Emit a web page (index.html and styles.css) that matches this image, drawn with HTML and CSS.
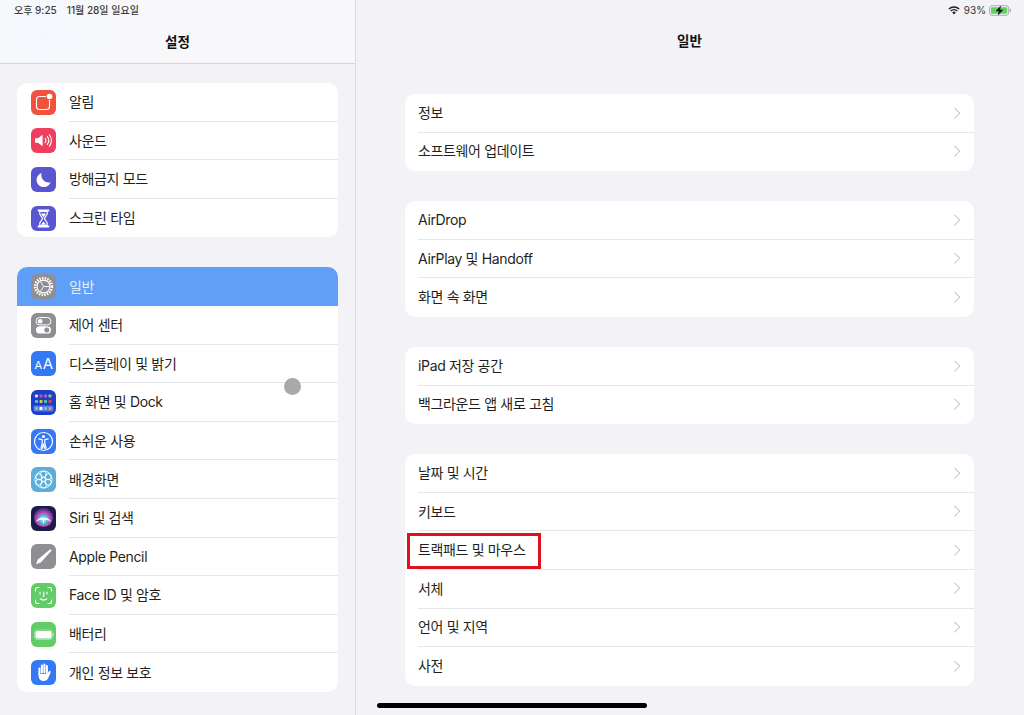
FILE: index.html
```html
<!DOCTYPE html>
<html lang="ko">
<head>
<meta charset="utf-8">
<title>설정 - 일반</title>
<link rel="stylesheet" href="styles.css">
</head>
<body>
<div class="screen">
  <aside class="sidebar">
    <header class="side-head">
      <div class="status-left"><span>오후 9:25</span><span>11월 28일 일요일</span></div>
      <h1 class="title">설정</h1>
    </header>
    <section class="card side-first">
      <div class="row"><span class="icon red"><svg viewBox="0 0 25 25"><rect x="5.5" y="6.5" width="13" height="13" rx="3" fill="none" stroke="#fff" stroke-width="1.1"/><circle cx="18.5" cy="6.5" r="3.6" fill="#f0533c"/><circle cx="18.5" cy="6.5" r="2.8" fill="#fff"/></svg></span><span class="label">알림</span></div>
      <div class="row"><span class="icon pink"><svg viewBox="0 0 25 25"><path d="M4 10.3h3l4.6-3.6v11.6L7 14.7H4z" fill="#fff"/><path d="M14 10.3a3 3 0 0 1 0 4.4M16.2 8.6a6 6 0 0 1 0 7.8M18.4 6.8a9 9 0 0 1 0 11.4" fill="none" stroke="#fff" stroke-width="1.1" stroke-linecap="round"/></svg></span><span class="label">사운드</span></div>
      <div class="row"><span class="icon indigo"><svg viewBox="0 0 25 25"><path d="M10.6 6a7.2 7.2 0 1 0 9 9.2 7.4 7.4 0 0 1-9-9.2z" fill="#fff"/></svg></span><span class="label">방해금지 모드</span></div>
      <div class="row"><span class="icon indigo"><svg viewBox="0 0 25 25"><path d="M7.5 4.5h10M7.5 20.5h10" stroke="#fff" stroke-width="1.8" stroke-linecap="round"/><path d="M8.8 5.5h7.4v2.6l-2.8 4.4 2.8 4.4v2.6H8.8v-2.6l2.8-4.4-2.8-4.4z" fill="none" stroke="#fff" stroke-width="1.2"/><path d="M9.8 18.8l2.7-3.4 2.7 3.4zM10 7.4h5l-2.5 4z" fill="#fff"/></svg></span><span class="label">스크린 타임</span></div>
    </section>
    <section class="card">
      <div class="row selected"><span class="icon gray"><svg viewBox="0 0 25 25"><circle cx="12.5" cy="12.5" r="8.4" fill="none" stroke="#fff" stroke-width="2.6" stroke-dasharray="1.5 1.2"/><circle cx="12.5" cy="12.5" r="6.4" fill="none" stroke="#fff" stroke-width="1.1"/><path d="M12.5 12.5H18.5M12.5 12.5L9.5 7.3M12.5 12.5L9.5 17.7" stroke="#fff" stroke-width=".9"/></svg></span><span class="label">일반</span></div>
      <div class="row"><span class="icon gray"><svg viewBox="0 0 25 25"><rect x="5" y="4.5" width="15" height="7.4" rx="3.7" fill="none" stroke="#fff" stroke-width="1"/><circle cx="9.2" cy="8.2" r="2.3" fill="#fff"/><rect x="5" y="13.2" width="15" height="7.4" rx="3.7" fill="#fff"/><circle cx="15.8" cy="16.9" r="2.5" fill="#8e8e93"/></svg></span><span class="label">제어 센터</span></div>
      <div class="row"><span class="icon blue"><span class="aa"><small>A</small>A</span></span><span class="label">디스플레이 및 밝기</span></div>
      <div class="row"><span class="icon navy"><svg viewBox="0 0 25 25"><g><rect x="4" y="4.5" width="3" height="3" rx=".7" fill="#d8d8e8"/><rect x="8.5" y="4.5" width="3" height="3" rx=".7" fill="#e0526a"/><rect x="13" y="4.5" width="3" height="3" rx=".7" fill="#a860d8"/><rect x="17.5" y="4.5" width="3" height="3" rx=".7" fill="#8fc860"/><rect x="4" y="10" width="3" height="3" rx=".7" fill="#60b8e8"/><rect x="8.5" y="10" width="3" height="3" rx=".7" fill="#f0c040"/><rect x="13" y="10" width="3" height="3" rx=".7" fill="#48c8a0"/><rect x="17.5" y="10" width="3" height="3" rx=".7" fill="#e04848"/></g><rect x="2.5" y="15.5" width="20" height="6" rx="1.6" fill="#5a78e0"/><rect x="4" y="17" width="3" height="3" rx=".7" fill="#70d088"/><rect x="8.5" y="17" width="3" height="3" rx=".7" fill="#fff"/><rect x="13" y="17" width="3" height="3" rx=".7" fill="#70c0f0"/><rect x="17.5" y="17" width="3" height="3" rx=".7" fill="#e89060"/></svg></span><span class="label">홈 화면 및 Dock</span></div>
      <div class="row"><span class="icon blue"><svg viewBox="0 0 25 25"><circle cx="12.5" cy="12.5" r="9" fill="none" stroke="#fff" stroke-width="1.2"/><circle cx="12.5" cy="7.6" r="1.5" fill="#fff"/><path d="M7.8 9.8l3.4.9v3.4l-1.2 5 1.3.2 1.2-4.4 1.2 4.4 1.3-.2-1.2-5v-3.4l3.4-.9" fill="none" stroke="#fff" stroke-width="1.2" stroke-linejoin="round" stroke-linecap="round"/></svg></span><span class="label">손쉬운 사용</span></div>
      <div class="row"><span class="icon sky"><svg viewBox="0 0 25 25"><g fill="none" stroke="#fff" stroke-width=".9"><circle cx="12.5" cy="12.5" r="2"/><circle cx="12.5" cy="7.2" r="3"/><circle cx="12.5" cy="17.8" r="3"/><circle cx="7.9" cy="9.85" r="3"/><circle cx="17.1" cy="9.85" r="3"/><circle cx="7.9" cy="15.15" r="3"/><circle cx="17.1" cy="15.15" r="3"/><circle cx="12.5" cy="12.5" r="8.6"/></g></svg></span><span class="label">배경화면</span></div>
      <div class="row"><span class="icon siri"><svg viewBox="0 0 25 25"><defs><radialGradient id="siriGlow" cx="50%" cy="60%" r="55%"><stop offset="0" stop-color="#e8f6ff"/><stop offset=".35" stop-color="#4cc4e4"/><stop offset=".7" stop-color="#c23eaa"/><stop offset="1" stop-color="#46368c"/></radialGradient></defs><circle cx="12.5" cy="11.5" r="9.5" fill="url(#siriGlow)"/><path d="M4.5 16Q9 10 12.5 12Q16 10 20.5 16Q16 13.2 12.5 14Q9 13.2 4.5 16zM11.6 12.5h1.8l-.9 7z" fill="#fff" opacity=".9"/></svg></span><span class="label">Siri 및 검색</span></div>
      <div class="row"><span class="icon gray"><svg viewBox="0 0 25 25"><path d="M19.2 5.2a1.2 1.2 0 0 1 1 1.9L9.8 18.4 5.2 20.2l1.4-4.4z" fill="#fff"/></svg></span><span class="label">Apple Pencil</span></div>
      <div class="row"><span class="icon green"><svg viewBox="0 0 25 25"><g fill="none" stroke="#fff" stroke-width="1.1" stroke-linecap="round"><path d="M4.5 8V6.5a2 2 0 0 1 2-2H8M17 4.5h1.5a2 2 0 0 1 2 2V8M4.5 17v1.5a2 2 0 0 0 2 2H8M17 20.5h1.5a2 2 0 0 0 2-2V17"/><path d="M9 9v2M16 9v2M12.8 9v4.2h-1M9.2 15.8q3.3 2.6 6.6 0"/></g></svg></span><span class="label">Face ID 및 암호</span></div>
      <div class="row"><span class="icon green"><svg viewBox="0 0 25 25"><rect x="4.5" y="9" width="16" height="7.5" rx="1.6" fill="#fff"/><rect x="3.6" y="8" width="17.8" height="9.5" rx="2.4" fill="none" stroke="#fff" stroke-width=".6" opacity=".7"/><rect x="22" y="11.5" width=".8" height="2.5" fill="#fff" opacity=".7"/></svg></span><span class="label">배터리</span></div>
      <div class="row"><span class="icon blue"><svg viewBox="0 0 25 25"><g fill="none" stroke="#fff" stroke-width="2" stroke-linecap="round"><path d="M8.4 8.5v6M10.9 5.6v7M13.4 4.6v8M15.9 6v7"/></g><path d="M7.4 13l.3 3.6a4.9 4.9 0 0 0 5 4.4 5 5 0 0 0 4.6-3l2.3-5.5a1 1 0 0 0-1.8-1l-1.9 2.6H7.4z" fill="#fff"/></svg></span><span class="label">개인 정보 보호</span></div>
    </section>
  </aside>
  <main class="detail">
    <header class="detail-head">
      <div class="status-right">
        <svg class="wifi" viewBox="0 0 14 10"><path d="M7 9.6L4.9 7.3a3 3 0 0 1 4.2 0zM3.8 6.2L2.6 4.9a6.3 6.3 0 0 1 8.8 0l-1.2 1.3a4.6 4.6 0 0 0-6.4 0zM1.6 3.9L.4 2.6a9.5 9.5 0 0 1 13.2 0l-1.2 1.3a7.8 7.8 0 0 0-10.8 0z" fill="#222"/></svg>
        <span>93%</span>
        <svg class="battery" viewBox="0 0 24 11"><rect x=".5" y=".5" width="20" height="10" rx="2.6" fill="none" stroke="#a8a8ac"/><rect x="2" y="2" width="17" height="7" rx="1.3" fill="#5fd35f"/><rect x="21.5" y="3.7" width="1.2" height="3.6" rx=".6" fill="#a8a8ac"/><path d="M12.6.4L6.8 6.2h3.4l-1 4.4 5.8-5.8h-3.4z" fill="#111"/></svg>
      </div>
      <h1 class="title">일반</h1>
    </header>
    <section class="card main-first">
      <div class="row"><span class="label">정보</span><span class="chev"></span></div>
      <div class="row"><span class="label">소프트웨어 업데이트</span><span class="chev"></span></div>
    </section>
    <section class="card">
      <div class="row"><span class="label">AirDrop</span><span class="chev"></span></div>
      <div class="row"><span class="label">AirPlay 및 Handoff</span><span class="chev"></span></div>
      <div class="row"><span class="label">화면 속 화면</span><span class="chev"></span></div>
    </section>
    <section class="card">
      <div class="row"><span class="label">iPad 저장 공간</span><span class="chev"></span></div>
      <div class="row"><span class="label">백그라운드 앱 새로 고침</span><span class="chev"></span></div>
    </section>
    <section class="card">
      <div class="row"><span class="label">날짜 및 시간</span><span class="chev"></span></div>
      <div class="row"><span class="label">키보드</span><span class="chev"></span></div>
      <div class="row"><span class="label">트랙패드 및 마우스</span><span class="chev"></span></div>
      <div class="row"><span class="label">서체</span><span class="chev"></span></div>
      <div class="row"><span class="label">언어 및 지역</span><span class="chev"></span></div>
      <div class="row"><span class="label">사전</span><span class="chev"></span></div>
    </section>
  </main>
  <div class="touch-dot"></div>
  <div class="highlight"></div>
  <div class="home-bar"></div>
</div>
</body>
</html>
```
FILE: styles.css
```css
* { box-sizing: border-box; }
html, body { margin: 0; padding: 0; }
body {
  font-family: "Inter", "Noto Sans CJK KR", sans-serif;
  color: #1c1c1e;
  background: #f2f2f7;
}
.screen {
  position: relative;
  display: flex;
  width: 1024px;
  height: 715px;
  overflow: hidden;
  background: #f2f2f7;
}
.sidebar {
  width: 356px;
  flex: none;
  padding: 0 17px 0 17px;
  border-right: 1px solid #dcdce0;
}
.side-head {
  height: 64px;
  margin: 0 -17px;
  border-bottom: 1px solid #d6d6da;
  background:
    radial-gradient(70px 50px at 45px 35px, #f4f8fe 0%, rgba(244,248,254,0) 100%),
    #f8f8fa;
}
.status-left {
  display: flex;
  gap: 10px;
  padding: 3px 0 0 14px;
  font-size: 10px;
  line-height: 14px;
  color: #3a3a3c;
  font-weight: 500;
}
.title {
  margin: 0;
  text-align: center;
  font-size: 13.5px;
  line-height: 20px;
  font-weight: 600;
  color: #111;
}
.side-head .title { padding-top: 15px; }
.detail { flex: 1; padding: 0 50px 0 49px; }
.detail-head { height: 64px; }
.detail-head .title { padding-top: 11px; }
.status-right {
  display: flex;
  justify-content: flex-end;
  align-items: center;
  gap: 3px;
  height: 20px;
  margin-right: -48px;
  padding-right: 10px;
  font-size: 10px;
  color: #333;
}
.wifi { width: 12px; height: 9px; margin-right: 1px; }
.battery { width: 23px; height: 11px; }
.card {
  background: #fff;
  border-radius: 10px;
  overflow: hidden;
  margin-top: 30px;
}
.side-first { margin-top: 19px; }
.main-first { margin-top: 30px; }
.row {
  position: relative;
  display: flex;
  align-items: center;
  height: 38.6px;
  padding: 0 13px;
  font-size: 14px;
  letter-spacing: -0.35px;
}
.label {
  flex: 1;
  white-space: nowrap;
  color: #1f1f21;
  line-height: 20px;
  padding-bottom: 1px;
}
.sidebar .label { padding-bottom: 0; }
.row + .row::before {
  content: "";
  position: absolute;
  left: 13px;
  right: 0;
  top: -1px;
  height: 1px;
  background: #e6e6ea;
}
.sidebar .row { padding-left: 14px; }
.sidebar .row + .row::before { left: 52px; }
.sidebar .selected + .row::before { display: none; }
.selected { background: #5f9ff8; }
.selected .label { color: #e2eefe; }
.icon {
  width: 25px;
  height: 25px;
  flex: none;
  margin-right: 13px;
  border-radius: 6px;
  display: flex;
  align-items: center;
  justify-content: center;
  overflow: hidden;
}
.icon svg { width: 25px; height: 25px; display: block; }
.red { background: #f0533c; }
.pink { background: #ee3f5f; }
.indigo { background: #5856d0; }
.gray { background: #8e8e93; }
.blue { background: #3478f6; }
.navy { background: #1c3fc8; }
.sky { background: #5aaedc; }
.green { background: #62cc68; }
.siri { background: #1c1c4a; }
.aa { color: #fff; font-size: 15px; line-height: 1; font-weight: 400; }
.aa small { font-size: 11px; margin-right: 1px; }
.chev {
  width: 7.5px;
  height: 7.5px;
  margin: 0 3px 2px 0;
  border-top: 1.6px solid #c6c6ca;
  border-right: 1.6px solid #c6c6ca;
  transform: rotate(45deg);
  flex: none;
}
.touch-dot {
  position: absolute;
  left: 284px;
  top: 378px;
  width: 17px;
  height: 17px;
  border-radius: 50%;
  background: #a9a9ab;
}
.highlight {
  position: absolute;
  left: 407px;
  top: 533px;
  width: 134px;
  height: 36px;
  border: 3px solid #e0101f;
}
.home-bar {
  position: absolute;
  left: 377px;
  top: 703px;
  width: 270px;
  height: 5px;
  border-radius: 3px;
  background: #000;
}
```
